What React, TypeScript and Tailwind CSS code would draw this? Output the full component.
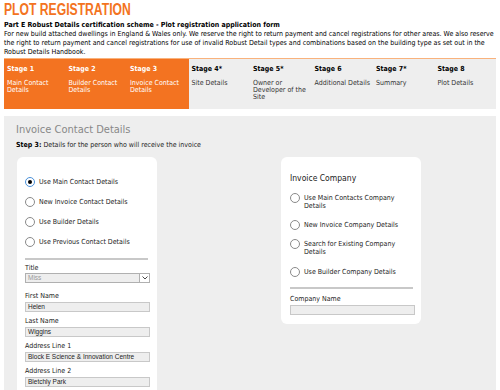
import React from "react";

const stages = [
  { t: "Stage 1", d: "Main Contact Details", on: true },
  { t: "Stage 2", d: "Builder Contact Details", on: true },
  { t: "Stage 3", d: "Invoice Contact Details", on: true },
  { t: "Stage 4*", d: "Site Details", on: false },
  { t: "Stage 5*", d: "Owner or Developer of the Site", on: false },
  { t: "Stage 6", d: "Additional Details", on: false },
  { t: "Stage 7*", d: "Summary", on: false },
  { t: "Stage 8", d: "Plot Details", on: false },
];

function Radio({ checked, label, className = "" }: { checked?: boolean; label: string; className?: string }) {
  return (
    <div className={`flex items-start gap-[4px] ${className}`}>
      <span
        className={`my-[-1px] w-[10px] h-[10px] shrink-0 rounded-full border flex items-center justify-center bg-white ${
          checked ? "border-[#4a90d9]" : "border-[#8a8a8a]"
        }`}
      >
        {checked && <span className="w-[4px] h-[4px] rounded-full bg-black" />}
      </span>
      <span className="text-[7px] leading-[8px] text-[#222]">{label}</span>
    </div>
  );
}

function Field({ label, value, className = "" }: { label: string; value: string; className?: string }) {
  return (
    <div className={className}>
      <div className="text-[7px] leading-[8px] text-[#222]">{label}</div>
      <div className="mt-[2px] h-[10px] w-[125px] border border-[#c8c8c8] bg-[#eeeeee] pl-[2px] text-[6.5px] leading-[8px] text-[#222] font-['Liberation_Sans',sans-serif]">
        {value}
      </div>
    </div>
  );
}

export default function App() {
  return (
    <div className="w-[500px] h-[390px] overflow-hidden bg-white font-['DejaVu_Sans_Condensed','DejaVu_Sans',sans-serif] text-black">
      <div className="px-[4px] pt-[3px]">
        <h1 className="h-[14px] text-[16px] leading-[14px] font-bold text-[#f37321] font-['Liberation_Sans',sans-serif]">
          <span className="inline-block origin-left scale-x-[0.76] whitespace-nowrap">PLOT REGISTRATION</span>
        </h1>
        <div className="mt-[4px] text-[7px] leading-[9px] font-bold">
          Part E Robust Details certification scheme - Plot registration application form
        </div>
        <p className="text-[7px] leading-[9px]">
          For new build attached dwellings in England &amp; Wales only. We reserve the right to return payment and cancel registrations for other areas. We also reserve the right to return payment and cancel registrations for use of invalid Robust Detail types and combinations based on the building type as set out in the Robust Details Handbook.
        </p>
      </div>

      <div className="mx-[4px] mt-[1px] h-[51px] grid grid-cols-8 border-t border-[#f9b27c]">
        {stages.map((s) => (
          <div
            key={s.t}
            className={`pl-[3px] pr-[2px] pt-[6px] ${s.on ? "bg-[#f37321] text-white" : "bg-[#eeeeee] text-[#333]"}`}
          >
            <div className={`text-[7px] leading-[8px] font-bold ${s.on ? "" : "text-black"}`}>{s.t}</div>
            <div className="mt-[7px] text-[7px] leading-[7px]">{s.d}</div>
          </div>
        ))}
      </div>

      <div className="mx-[4px] mt-[7px] h-[300px] bg-[#eeeeee] pl-[12px] pt-[7px]">
        <div className="text-[11px] leading-[14px] text-[#888888]">Invoice Contact Details</div>
        <div className="mt-[4px] text-[7px] leading-[8px] text-[#222]">
          <span className="font-bold text-black">Step 3:</span> Details for the person who will receive the invoice
        </div>

        <div className="mt-[8px] flex items-start gap-[124px] pl-[1px]">
          <div className="w-[140px] h-[260px] bg-white rounded-[6px] pl-[8px] pr-[7px] pt-[21px]">
            <Radio checked label="Use Main Contact Details" />
            <Radio label="New Invoice Contact Details" className="mt-[12px]" />
            <Radio label="Use Builder Details" className="mt-[12px]" />
            <Radio label="Use Previous Contact Details" className="mt-[12px]" />
            <div className="mt-[12px] h-[2px] w-[123px] bg-[#c8c8c8]" />
            <div className="mt-[4px] text-[7px] leading-[8px] text-[#222]">Title</div>
            <div className="mt-[1px] h-[10px] w-[125px] border border-[#b0b0b0] bg-[#eeeeee] flex items-center justify-between">
              <span className="pl-[2px] text-[6.5px] leading-[8px] text-[#999] font-['Liberation_Sans',sans-serif]">Miss</span>
              <span className="h-full w-[10px] border-l border-[#b0b0b0] bg-white flex items-center justify-center">
                <svg width="6" height="4" viewBox="0 0 6 4">
                  <path d="M0.5 0.5 L3 3 L5.5 0.5" fill="none" stroke="#333" strokeWidth="0.9" />
                </svg>
              </span>
            </div>
            <Field label="First Name" value="Helen" className="mt-[9px]" />
            <Field label="Last Name" value="Wiggins" className="mt-[5px]" />
            <Field label="Address Line 1" value="Block E Science & Innovation Centre" className="mt-[5px]" />
            <Field label="Address Line 2" value="Bletchly Park" className="mt-[5px]" />
          </div>

          <div className="w-[140px] h-[167px] bg-white rounded-[6px] pl-[9px] pr-[6px] pt-[16px]">
            <div className="text-[8.5px] leading-[10px] text-[#222]">Invoice Company</div>
            <Radio label={"Use Main Contacts Company Details"} className="mt-[11px] pr-[20px]" />
            <Radio label="New Invoice Company Details" className="mt-[11px]" />
            <Radio label="Search for Existing Company Details" className="mt-[11px] pr-[4px]" />
            <Radio label="Use Builder Company Details" className="mt-[12px]" />
            <div className="mt-[11px] h-[2px] w-[123px] bg-[#c8c8c8]" />
            <div className="mt-[6px] text-[7px] leading-[8px] text-[#222]">Company Name</div>
            <div className="mt-[2px] h-[10px] w-[125px] border border-[#c8c8c8] bg-[#eeeeee]" />
          </div>
        </div>
      </div>
    </div>
  );
}
